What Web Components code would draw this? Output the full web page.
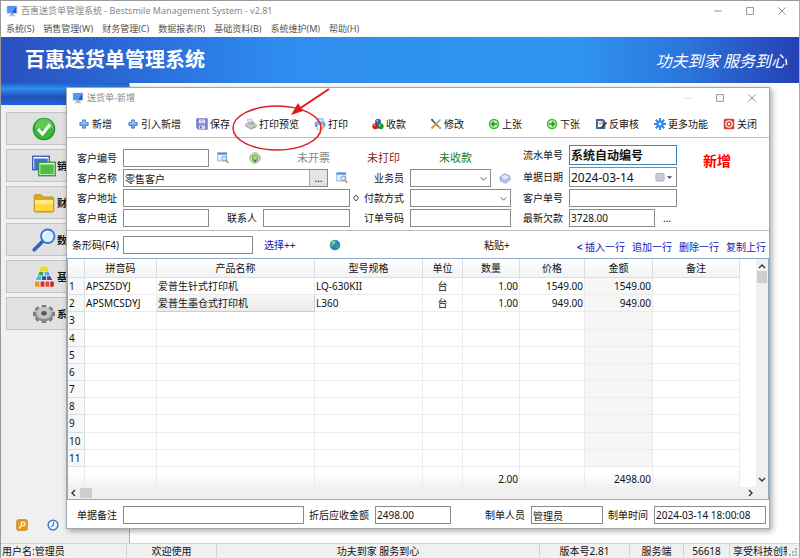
<!DOCTYPE html>
<html lang="zh-CN">

<head>
    <meta charset="utf-8">
    <title>百惠送货单管理系统 - Bestsmile Management System - v2.81</title>
    <style>
        body {
            margin: 0;
            font: 10px/14px "Noto Sans", "Noto Sans CJK SC", sans-serif;
            color: #111;
            background: #fff;
        }
    </style>
</head>

<body>
    <app-window>
        <window-title slot="title" icon="monitor">百惠送货单管理系统 - Bestsmile Management System - v2.81</window-title>
        <menu-bar slot="menu" items="系统(S),销售管理(W),财务管理(C),数据报表(R),基础资料(B),系统维护(M),帮助(H)"></menu-bar>
        <brand-banner slot="banner">
            百惠送货单管理系统
            <span slot="slogan">功夫到家 服务到心</span>
        </brand-banner>
        <side-nav slot="nav">
            <nav-item icon="check" name="主页"></nav-item>
            <nav-item icon="windows" name="销售管理">销</nav-item>
            <nav-item icon="folder" name="财务管理">财</nav-item>
            <nav-item icon="magnifier" name="数据报表">数</nav-item>
            <nav-item icon="palette" name="基础资料">基</nav-item>
            <nav-item icon="cog" name="系统维护">系</nav-item>
        </side-nav>
        <order-dialog></order-dialog>
        <status-bar slot="status"></status-bar>
    </app-window>
</body>
<script>
    // all icons are drawn on a 16x16 box
    const icons = {
        monitor: `<rect x="1" y="1" width="14" height="10.5" rx="1" fill="#b9c6dc"/><rect x="2.200" y="2" width="11.600" height="8.500" fill="#1c55d8"/><path d="M2.200 2h11.600L8 10.500H2.200z" fill="#4f9af5"/><path d="M6 11.500h4v2H6z" fill="#9a9a9a"/><path d="M4 13.500h8V15H4z" fill="#bbb"/>`,
        plus: `<path d="M6 2.500h4V6h3.500v4H10v3.500H6V10H2.500V6H6z" fill="#6ea3ea" stroke="#4d84d0" stroke-width="1.200" stroke-linejoin="round"/><path d="M7 4h2v3h3v1H4V7h3z" fill="#a6cbf8"/>`,
        save: `<path d="M1 1h14v14H3l-2-2z" fill="#8484d8" stroke="#6464b4"/><path d="M4 2h8v5H4z" fill="#f2f2ff"/><path d="M5 3.500h6M5 5.500h6" stroke="#a5a5d5"/><path d="M4 10h8v5H4z" fill="#ddd"/><path d="M5.500 11h2v3h-2z" fill="#5b5bb5"/>`,
        preview: `<path d="M3 2l6-1 3 6-7 2z" fill="#dceaf7" stroke="#a8b6c2" stroke-width=".8"/><path d="M1 8l9-3 5 4v3l-7 3-7-4z" fill="#b8b8b8" stroke="#8d8d8d" stroke-width=".8"/><path d="M1 8l7 3.500L15 9" stroke="#eee" fill="none"/><circle cx="12" cy="11.500" r="1" fill="#5b5"/>`,
        print: `<path d="M4 1h8v5H4z" fill="#d7e6fa" stroke="#6d98d8"/><rect x="1" y="5" width="14" height="7" rx="2" fill="#5f94e8"/><path d="M2 7h12" stroke="#bdd6ff"/><path d="M4 9h8v6H4z" fill="#fff" stroke="#b0a080"/><path d="M7 12l6-2 1 3-5 2z" fill="#f5b93c"/>`,
        balls: `<circle cx="8" cy="5" r="4" fill="#3864c8"/><circle cx="4.500" cy="11" r="4" fill="#d81818"/><circle cx="11.500" cy="11" r="4" fill="#189838"/><circle cx="7" cy="3.600" r="1.200" fill="#9fbdf5"/><circle cx="3.300" cy="9.600" r="1.200" fill="#ff9a9a"/><circle cx="10.400" cy="9.600" r="1.200" fill="#8fe0a0"/>`,
        tools: `<path d="M2 2l12 12" stroke="#555" stroke-width="2.200"/><path d="M1 1l3.500 1L3 4.500z" fill="#444"/><path d="M14 2L3 13" stroke="#8fa0b8" stroke-width="2"/><path d="M8 8l-6 6" stroke="#d6a030" stroke-width="2.600"/><path d="M10 10l4 4" stroke="#e0a838" stroke-width="2.600"/>`,
        prev: `<circle cx="8" cy="8" r="7" fill="#3db83a"/><circle cx="8" cy="8" r="5" fill="#c8f4b8"/><path d="M12 8H5M8 5L5 8l3 3" stroke="#249824" stroke-width="2" fill="none"/>`,
        next: `<circle cx="8" cy="8" r="7" fill="#3db83a"/><circle cx="8" cy="8" r="5" fill="#c8f4b8"/><path d="M4 8h7M8 5l3 3-3 3" stroke="#249824" stroke-width="2" fill="none"/>`,
        review: `<path d="M2 2h9l2 2v10H2z" fill="#3c6cb8" stroke="#1f4484"/><path d="M4 4h6v8H4z" fill="#fff"/><path d="M5 6l2 2 3-4" stroke="#e8a020" stroke-width="1.600" fill="none"/><path d="M15 5l-7 7-1 2 2.500-.6L16 7z" fill="#333"/>`,
        gear: `<g stroke="#2f86e8" stroke-width="2.600"><path d="M8 0v16M0 8h16M2.400 2.400l11.200 11.200M13.600 2.400L2.400 13.600"/></g><circle cx="8" cy="8" r="4.800" fill="#2f86e8"/><circle cx="8" cy="8" r="2" fill="#d8ebff"/>`,
        power: `<rect x="1" y="1" width="14" height="14" rx="2" fill="#d8462c"/><circle cx="8" cy="8" r="4.300" fill="none" stroke="#fff" stroke-width="1.500"/><circle cx="8" cy="8" r="1.700" fill="#fff"/>`,
        find: `<rect x="1" y="1" width="12" height="11" fill="#e8f3ff" stroke="#7fa8d8"/><path d="M1 1h12v2.500H1z" fill="#4d88d8"/><circle cx="9.500" cy="8.500" r="3.200" fill="#cfe9ff" stroke="#5a8fc8"/><path d="M12 11l3 3.500" stroke="#e09030" stroke-width="2.200"/>`,
        refresh: `<circle cx="8" cy="8" r="6.800" fill="#e4efdc" stroke="#7f9f74" stroke-width="1.200"/><circle cx="8" cy="8" r="4.600" fill="#6fb552"/><path d="M5 11h6l-3 3z" fill="#3b8a2c"/><circle cx="8" cy="7.500" r="2.600" fill="#a5dc8a"/>`,
        tag: `<path d="M1 7l6-5 7 3 1 5-6 5-7-3z" fill="#b8c4f0" stroke="#8a9ad0"/><path d="M3 7l4-3.500L13 6 9 9.500z" fill="#e6ebff"/>`,
        globe: `<circle cx="8" cy="8" r="7" fill="#2f7ae0"/><path d="M3 4c3-3 7-2 7 0s-3 2-3 4-3 3-5 1c-1-1-.5-3 1-5z" fill="#4cc048"/><path d="M10 8c3-1 4 0 4 1s-2 5-4 4-2-4 0-5z" fill="#3ab044"/><circle cx="6" cy="4.500" r="1.500" fill="#d0f0e0" opacity=".7"/>`,
        calendar: `<rect x="1.500" y="2.500" width="13" height="12" rx="2" fill="#dcdfe8" stroke="#777c8c"/><path d="M3 6h10M3 9h10M3 12h10M6 4v9M10 4v9" stroke="#a8adbd" stroke-width=".8"/>`,
        diamond: `<path d="M8 2l5 6-5 6-5-6z" fill="none" stroke="#333" stroke-width="1.800"/>`,
        down: `<path d="M3 6l5 5 5-5" fill="none" stroke="#444" stroke-width="1.500"/>`,
        drop: `<path d="M2 5h12l-6 6z" fill="#334466"/>`,
        check: `<circle cx="8" cy="8" r="7.500" fill="#1e9426"/><circle cx="8" cy="8" r="6.700" fill="#3cb83c"/><path d="M1.800 7a6.200 6.200 0 0 1 12.400 0C11 8.500 5 8.500 1.800 7z" fill="#70d060" opacity=".7"/><path d="M4 8l3 3.300L12 5" fill="none" stroke="#fff" stroke-width="2"/>`,
        windows: `<rect x=".5" y="1.500" width="11" height="9" fill="#fff" stroke="#2448a8" stroke-width=".8"/><rect x="1.500" y="3" width="9" height="7" fill="#4272d8"/><rect x="4.500" y="5.500" width="11" height="9" fill="#dff5d8" stroke="#2a8a2a" stroke-width=".8"/><rect x="5.500" y="7" width="9" height="6.500" fill="#48c048"/>`,
        folder: `<path d="M1.500 3.500q0-1 1-1H6l1.500 1.500h6q1 0 1 1v8q0 1-1 1h-11q-1 0-1-1z" fill="#e0a818" stroke="#c08a10" stroke-width=".6"/><path d="M2 6h12v7.300H2z" fill="#ffd840"/><path d="M2 6h12v2.500H2z" fill="#ffec88"/>`,
        magnifier: `<path d="M7 9l-5.500 5.500" stroke="#2a64c0" stroke-width="2.400" stroke-linecap="round"/><circle cx="10.500" cy="5.500" r="4.500" fill="#d8efff" stroke="#3878d0" stroke-width="1.200"/><path d="M7.800 5a3 3 0 0 1 3-2.500" stroke="#fff" fill="none"/>`,
        palette: `<path d="M6 1l4 0 5 9v5H1.500v-4z" fill="#e8e8e8"/><path d="M6 1h4l1 3H5z" fill="#e8dc28"/><path d="M5 4.500h2.500v2.500H4z" fill="#38a848"/><path d="M8.500 4.500H11l1 2.500H8.500z" fill="#58a8e8"/><path d="M3.500 7.500H6V10H2.500z" fill="#48b8e0"/><path d="M6.600 7.500h2.800V10H6.600z" fill="#3048b8"/><path d="M10 7.500h2.300l1.200 2.500H10z" fill="#6838a8"/><path d="M2 11h3v3.500H2z" fill="#f09030"/><path d="M5.700 11h2.600v3.500H5.700z" fill="#d83028"/><path d="M9 11h2.500v3.500H9z" fill="#e04838"/><path d="M12.200 11h2.300v3.500h-2.300z" fill="#c82020"/>`,
        cog: `<g stroke="#7c7c7c" stroke-width="3"><path d="M8 2v12M.7 8h14.600M2.600 4l10.800 8M13.400 4L2.600 12"/></g><ellipse cx="8" cy="8.400" rx="5.600" ry="4.600" fill="#8c8c8c"/><ellipse cx="8" cy="7.400" rx="5.200" ry="4" fill="#c4c4c4"/><ellipse cx="8" cy="7.500" rx="1.800" ry="1.500" fill="#555"/>`,
        key: `<rect x="1" y="1" width="14" height="14" rx="2" fill="#e8a020" stroke="#a87010"/><circle cx="9.500" cy="6.500" r="2.500" fill="none" stroke="#fff" stroke-width="1.500"/><path d="M7.500 8.500L4 12.500" stroke="#fff" stroke-width="1.600"/>`,
        clock: `<circle cx="8" cy="8" r="6.500" fill="#eef5ff" stroke="#3c78d0" stroke-width="2"/><path d="M8.500 4v4.500L5.500 10" stroke="#2850a0" stroke-width="1.300" fill="none"/>`,
        min: `<path d="M2 8h12" stroke="currentColor" stroke-width="1.400"/>`,
        max: `<path d="M2.500 2.500h11v11h-11z" stroke="currentColor" stroke-width="1.400" fill="none"/>`,
        close: `<path d="M2 2l12 12M14 2L2 14" stroke="currentColor" stroke-width="1.400"/>`,
    };

    // base class, puts the markup of render() in a shadow root
    class BaseElement extends HTMLElement {
        constructor() {
            super();
            this.shadow = this.attachShadow({ mode: 'open' });
        }
        connectedCallback() {
            this.shadow.innerHTML = this.render();
        }
        attr(name) {
            return this.getAttribute(name) || '';
        }
    }

    class UiIcon extends BaseElement {
        render() {
            return `
            <style>
                :host { display: inline-block; flex: none; width: var(--icon-size, 12px); height: var(--icon-size, 12px); }
                svg { display: block; width: 100%; height: 100%; }
            </style>
            <svg viewBox="0 0 16 16" aria-hidden="true">${icons[this.attr('name')]}</svg>`;
        }
    }
    customElements.define('ui-icon', UiIcon);

    class AppWindow extends BaseElement {
        render() {
            return `
            <style>
                :host {
                    display: flex;
                    flex-direction: column;
                    position: relative;
                    box-sizing: border-box;
                    min-height: 100vh;
                    overflow: hidden;
                    border-left: 1px solid #999;
                    border-right: 1px solid #aaa;
                    border-top: 1px solid #999;
                }
                main { flex: 1; display: flex; }
            </style>
            <slot name="title"></slot>
            <slot name="menu"></slot>
            <slot name="banner"></slot>
            <main><slot name="nav"></slot><slot></slot></main>
            <slot name="status"></slot>`;
        }
    }
    customElements.define('app-window', AppWindow);

    class WindowTitle extends BaseElement {
        render() {
            return `
            <style>
                :host { display: flex; align-items: center; gap: 3px; height: 20px; padding: 0 12px 0 5px; font-size: 9px; color: #888; }
                .text { flex: 1; }
                .controls { display: flex; gap: 22px; }
                button { border: 0; padding: 0; background: none; color: #888; display: flex; --icon-size: 10px; }
                :host([fixed]) button:first-child { color: #ddd; }
            </style>
            <ui-icon name="${this.attr('icon')}"></ui-icon>
            <span class="text"><slot></slot></span>
            <div class="controls">
                <button aria-label="最小化"><ui-icon name="min"></ui-icon></button>
                <button aria-label="最大化"><ui-icon name="max"></ui-icon></button>
                <button aria-label="关闭窗口"><ui-icon name="close"></ui-icon></button>
            </div>`;
        }
    }
    customElements.define('window-title', WindowTitle);

    class MenuBar extends BaseElement {
        render() {
            const items = this.attr('items').split(',').map(t => `<button>${t}</button>`).join('');
            return `
            <style>
                :host { display: block; }
                nav { display: flex; gap: 9px; padding: 0 5px; height: 16px; }
                button { font: inherit; font-size: 9px; line-height: 16px; color: #555; border: 0; padding: 0; background: none; }
            </style>
            <nav>${items}</nav>`;
        }
    }
    customElements.define('menu-bar', MenuBar);

    class BrandBanner extends BaseElement {
        render() {
            return `
            <style>
                :host {
                    display: block;
                    background: linear-gradient(90deg, #2a4fc0, #2a6ddb 18%, #2e8eef 36%, #2f95f1 72%, #2c74dc 86%, #2540b4);
                }
                header { display: flex; align-items: center; justify-content: space-between; height: 46px; padding: 0 12px 0 24px; }
                h1 { margin: 0; font-size: 20px; line-height: 28px; font-weight: bold; color: #fff; }
                .slogan { font: italic 16px/20px "STXingkai", "KaiTi", "Noto Sans CJK SC", sans-serif; color: #fff; }
            </style>
            <header>
                <h1><slot></slot></h1>
                <div class="slogan"><slot name="slogan"></slot></div>
            </header>`;
        }
    }
    customElements.define('brand-banner', BrandBanner);

    class SideNav extends BaseElement {
        render() {
            return `
            <style>
                :host { display: flex; flex-direction: column; box-sizing: border-box; width: 129px; background: #f0f0f0; border-right: 1px solid #8fb4dc; }
                .head { height: 22px; background: linear-gradient(#1c62cc, #2f8ef0 25%, #2350b8 65%, #1f64dc); }
                .items { flex: 1; display: flex; flex-direction: column; gap: 4px; padding: 7px 5px; }
                .tools { display: flex; gap: 19px; padding: 0 15px 12px; }
                button { display: flex; border: 0; padding: 0; background: none; }
            </style>
            <div class="head"></div>
            <div class="items"><slot></slot></div>
            <div class="tools">
                <button aria-label="密码"><ui-icon name="key"></ui-icon></button>
                <button aria-label="时钟"><ui-icon name="clock"></ui-icon></button>
            </div>`;
        }
    }
    customElements.define('side-nav', SideNav);

    class NavItem extends BaseElement {
        render() {
            return `
            <style>
                :host { display: block; --icon-size: 24px; }
                button {
                    display: flex;
                    align-items: center;
                    gap: 1px;
                    box-sizing: border-box;
                    width: 100%;
                    height: 33px;
                    padding: 0 0 0 25px;
                    font: inherit;
                    font-weight: bold;
                    color: #111;
                    border: 1px solid #c4c4c4;
                    background: #e1e1e1;
                    white-space: nowrap;
                    overflow: hidden;
                }
            </style>
            <button aria-label="${this.attr('name')}"><ui-icon name="${this.attr('icon')}"></ui-icon><slot></slot></button>`;
        }
    }
    customElements.define('nav-item', NavItem);

    class ToolButton extends BaseElement {
        render() {
            return `
            <style>
                :host { display: block; }
                button { display: flex; align-items: center; gap: 2px; height: 20px; padding: 0; border: 0; background: none; font: inherit; color: #111; white-space: nowrap; }
            </style>
            <button><ui-icon name="${this.attr('icon')}"></ui-icon><slot></slot></button>`;
        }
    }
    customElements.define('tool-button', ToolButton);

    // label + text box, or label + drop-down with type="select"
    class FormField extends BaseElement {
        render() {
            const isSelect = this.attr('type') === 'select';
            const control = isSelect
                ? `<select><option>${this.attr('value')}</option></select><ui-icon class="arrow" name="down"></ui-icon>`
                : `<input type="text" value="${this.attr('value')}">`;
            return `
            <style>
                :host { display: flex; min-width: 0; }
                label { flex: 1; display: flex; align-items: center; gap: 6px; min-width: 0; white-space: nowrap; }
                .label { width: var(--label-width, auto); text-align: right; }
                .box {
                    flex: 1;
                    display: flex;
                    align-items: center;
                    box-sizing: border-box;
                    min-width: 0;
                    height: var(--box-height, 18px);
                    border: 1px solid var(--box-border, #8a8a8a);
                    background: #fff;
                }
                input, select {
                    flex: 1;
                    min-width: 0;
                    width: 0;
                    height: 100%;
                    box-sizing: border-box;
                    padding: 0 1px;
                    border: 0;
                    outline: 0;
                    background: none;
                    appearance: none;
                    color: #111;
                    font: inherit;
                    font-size: var(--box-font, 10px);
                    font-weight: var(--box-weight, normal);
                }
                .arrow { --icon-size: 9px; margin-right: 2px; }
            </style>
            <label>
                <span class="label">${this.attr('label')}</span>
                <span class="box">${control}<slot></slot></span>
            </label>`;
        }
    }
    customElements.define('form-field', FormField);

    const headers = ['', '拼音码', '产品名称', '型号规格', '单位', '数量', '价格', '金额', '备注', ''];
    const lines = [
        ['APSZSDYJ', '爱普生针式打印机', 'LQ-630KII', '台', '1.00', '1549.00', '1549.00', '', ''],
        ['APSMCSDYJ', '爱普生墨仓式打印机', 'L360', '台', '1.00', '949.00', '949.00', '', ''],
    ];

    class OrderGrid extends BaseElement {
        render() {
            const widths = [17, 72, 158, 108, 40, 57, 65, 68, 87];
            const cols = widths.map(w => `<col style="width:${w}px">`).join('') + '<col>';
            const head = headers.map(h => `<th>${h}</th>`).join('');
            let body = '';
            for (let i = 0; i < 11; i++) {
                const line = lines[i] || Array(9).fill('');
                body += `<tr><th>${i + 1}</th>${line.map(c => `<td>${c}</td>`).join('')}</tr>`;
            }
            const foot = ['', '', '', '', '', '2.00', '', '2498.00', '', ''].map(c => `<td>${c}</td>`).join('');
            return `
            <style>
                :host { display: block; border: 1px solid #8ea9c9; background: #fff; }
                .view { display: flex; }
                table { flex: 1; min-width: 0; height: 228px; table-layout: fixed; border-collapse: separate; border-spacing: 0; }
                th, td { padding: 0 1px; line-height: 14px; white-space: nowrap; overflow: hidden; font-weight: normal; border-right: 1px solid #ececec; border-bottom: 1px solid #ececec; }
                thead th { height: 18px; text-align: center; background: linear-gradient(#fff, #f1f3f5); border-color: #d9dfe6; }
                tbody th { text-align: left; background: #f7f8f9; border-color: #dcdfe2; }
                td:nth-child(5) { text-align: center; }
                td:nth-child(6), td:nth-child(7), td:nth-child(8) { text-align: right; }
                tbody td:nth-child(8) { background: #f6f6f6; }
                tbody tr:nth-child(2) td:nth-child(3) { background: linear-gradient(#f6f6f6, #ececec); border-color: #ccc; }
                th:last-child, td:last-child { border-color: transparent; background: none; }
                tfoot td { height: 17px; padding-top: 3px; background: linear-gradient(#fff 30%, #f1f2f4); border-bottom: 0; }
                .vbar, .hbar { display: flex; justify-content: space-between; background: #f0f0f0; }
                .vbar { flex-direction: column; align-items: center; width: 12px; padding: 2px 0; box-sizing: border-box; }
                .hbar { align-items: center; height: 12px; padding: 0 12px 0 0; }
                .thumb { background: #cdcdcd; }
                .vbar .thumb { width: 10px; height: 12px; margin-bottom: auto; }
                .hbar .thumb { width: 12px; height: 10px; margin: 0 auto 0 2px; }
                svg { width: 8px; height: 8px; fill: none; stroke: #333; stroke-width: 1.400; margin: 1px; }
            </style>
            <div class="view">
                <table>
                    <colgroup>${cols}</colgroup>
                    <thead><tr>${head}</tr></thead>
                    <tbody>${body}</tbody>
                    <tfoot><tr>${foot}</tr></tfoot>
                </table>
                <div class="vbar">
                    <svg viewBox="0 0 8 8"><path d="M1 6l3-3 3 3"/></svg>
                    <div class="thumb"></div>
                    <svg viewBox="0 0 8 8"><path d="M1 2l3 3 3-3"/></svg>
                </div>
            </div>
            <div class="hbar">
                <svg viewBox="0 0 8 8"><path d="M6 1L3 4l3 3"/></svg>
                <div class="thumb"></div>
                <svg viewBox="0 0 8 8"><path d="M2 1l3 3-3 3"/></svg>
            </div>`;
        }
    }
    customElements.define('order-grid', OrderGrid);

    class OrderDialog extends BaseElement {
        render() {
            return `
            <style>
                /* floats over the main window */
                :host {
                    display: block;
                    position: absolute;
                    left: 65px;
                    right: 29px;
                    top: 86px;
                    border: 1px solid #a6a6a6;
                    background: #fff;
                    box-shadow: 2px 2px 6px rgba(0, 0, 0, .35);
                }
                .toolbar { display: flex; justify-content: space-between; padding: 6px 12px 3px 11px; border-bottom: 1px solid #bbb; }
                .group { display: flex; gap: 15px; }
                .group.wide { gap: 24px; }
                .form { display: flex; padding: 7px 38px 3px 10px; border-bottom: 1px solid #bbb; }
                .col { display: flex; flex-direction: column; gap: 2px; }
                .a { flex: 1; min-width: 0; padding-top: 4px; margin-right: 4px; }
                .b { width: 147px; padding-top: 4px; margin-right: 12px; --label-width: 40px; }
                .c { width: 154px; }
                .row { display: flex; align-items: center; gap: 8px; height: 18px; }
                .row.tall { height: 20px; --box-height: 20px; --box-font: 12px; }
                .row.name { padding-right: 12px; }
                .row.address { gap: 2px; --icon-size: 8px; }
                .row.phone { gap: 18px; padding-right: 10px; }
                .code { width: 132px; }
                .grow { flex: 1; }
                .state { font-size: 11px; color: #888; white-space: nowrap; }
                .a .state { margin: 0 30px 0 auto; }
                .b .states { padding-left: 3px; gap: 39px; }
                .state.unprinted { color: #902020; }
                .state.unpaid { color: #208020; }
                .find-more { margin-left: 12px; }
                .number { --box-border: #3f86b8; --box-weight: bold; }
                .stamp { width: 28px; margin: 7px 0 0 26px; font: bold 14px/20px "Liberation Serif", "Noto Sans CJK SC", serif; color: #f00; white-space: nowrap; }
                button { font: inherit; color: inherit; border: 0; padding: 0; background: none; display: flex; align-items: center; }
                .lookup { width: 18px; height: 16px; justify-content: center; background: #e4e4e4; border-left: 1px solid #aaa; }
                .date { gap: 1px; margin-right: 3px; --icon-size: 10px; }
                .date ui-icon + ui-icon { --icon-size: 7px; }
                .barcode { display: flex; align-items: center; gap: 11px; height: 27px; padding: 0 3px 0 5px; }
                .barcode form-field { width: 181px; --label-width: 45px; }
                .barcode ui-icon { margin-left: 23px; }
                .barcode .paste { margin: 0 56px 0 auto; }
                a { color: #1414b8; text-decoration: none; white-space: nowrap; }
                .links { display: flex; gap: 7px; padding-top: 4px; }
                .bottom { display: flex; gap: 5px; padding: 6px 3px 4px 10px; }
                .bottom .amount { width: 142px; margin-right: 29px; }
                .bottom .maker { width: 118px; }
                .bottom .time { width: 158px; }
                .mark { position: absolute; left: 164px; top: -3px; width: 104px; height: 70px; pointer-events: none; }
            </style>
            <window-title icon="monitor" fixed>送货单-新增</window-title>
            <div class="toolbar">
                <div class="group">
                    <tool-button icon="plus">新增</tool-button>
                    <tool-button icon="plus">引入新增</tool-button>
                    <tool-button icon="save">保存</tool-button>
                    <tool-button icon="preview">打印预览</tool-button>
                </div>
                <div class="group wide">
                    <tool-button icon="print">打印</tool-button>
                    <tool-button icon="balls">收款</tool-button>
                    <tool-button icon="tools">修改</tool-button>
                    <tool-button icon="prev">上张</tool-button>
                    <tool-button icon="next">下张</tool-button>
                </div>
                <div class="group">
                    <tool-button icon="review">反审核</tool-button>
                    <tool-button icon="gear">更多功能</tool-button>
                    <tool-button icon="power">关闭</tool-button>
                </div>
            </div>
            <div class="form">
                <div class="col a">
                    <div class="row">
                        <form-field class="code" label="客户编号"></form-field>
                        <button aria-label="查找客户"><ui-icon name="find"></ui-icon></button>
                        <button class="find-more" aria-label="刷新"><ui-icon name="refresh"></ui-icon></button>
                        <span class="state">未开票</span>
                    </div>
                    <div class="row name">
                        <form-field class="grow" label="客户名称" value="零售客户"><button class="lookup">...</button></form-field>
                        <button aria-label="查找名称"><ui-icon name="find"></ui-icon></button>
                    </div>
                    <div class="row address">
                        <form-field class="grow" label="客户地址"></form-field>
                        <ui-icon name="diamond"></ui-icon>
                    </div>
                    <div class="row phone">
                        <form-field class="code" label="客户电话"></form-field>
                        <form-field class="grow" label="联系人"></form-field>
                    </div>
                </div>
                <div class="col b">
                    <div class="row states">
                        <span class="state unprinted">未打印</span>
                        <span class="state unpaid">未收款</span>
                    </div>
                    <div class="row">
                        <form-field class="grow" type="select" label="业务员"></form-field>
                        <button aria-label="选择业务员"><ui-icon name="tag"></ui-icon></button>
                    </div>
                    <div class="row"><form-field class="grow" type="select" label="付款方式"></form-field></div>
                    <div class="row"><form-field class="grow" label="订单号码"></form-field></div>
                </div>
                <div class="col c">
                    <div class="row tall"><form-field class="grow number" label="流水单号" value="系统自动编号"></form-field></div>
                    <div class="row tall">
                        <form-field class="grow" label="单据日期" value="2024-03-14">
                            <button class="date" aria-label="选择日期"><ui-icon name="calendar"></ui-icon><ui-icon name="drop"></ui-icon></button>
                        </form-field>
                    </div>
                    <div class="row"><form-field class="grow" label="客户单号"></form-field></div>
                    <div class="row">
                        <form-field class="code" label="最新欠款" value="3728.00"></form-field>
                        <button aria-label="欠款明细">...</button>
                    </div>
                </div>
                <div class="stamp">新增</div>
            </div>
            <div class="barcode">
                <form-field label="条形码(F4)"></form-field>
                <a href="#">选择++</a>
                <ui-icon name="globe"></ui-icon>
                <button class="paste">粘贴+</button>
                <div class="links">
                    <a href="#"><b>&lt;</b> 插入一行</a>
                    <a href="#">追加一行</a>
                    <a href="#">删除一行</a>
                    <a href="#">复制上行</a>
                </div>
            </div>
            <order-grid></order-grid>
            <div class="bottom">
                <form-field class="grow" label="单据备注"></form-field>
                <form-field class="amount" label="折后应收金额" value="2498.00"></form-field>
                <form-field class="maker" label="制单人员" value="管理员"></form-field>
                <form-field class="time" label="制单时间" value="2024-03-14 18:00:08"></form-field>
            </div>
            <svg class="mark" viewBox="0 0 104 70">
                <ellipse cx="46" cy="43" rx="44" ry="22" fill="none" stroke="#d8202c" stroke-width="1.500"/>
                <path d="M98 4L68 24" stroke="#e01818" stroke-width="2"/>
                <path d="M60 30l7-12 5 8z" fill="#e01818"/>
            </svg>`;
        }
    }
    customElements.define('order-dialog', OrderDialog);

    class StatusBar extends BaseElement {
        render() {
            return `
            <style>
                :host { display: block; background: #f0f0f0; border-top: 1px solid #d4d4d4; }
                footer { display: flex; height: 14px; line-height: 14px; text-align: center; white-space: nowrap; }
                span { box-sizing: border-box; overflow: hidden; border-right: 1px solid #d4d4d4; }
                .user { width: 126px; padding-left: 1px; text-align: left; }
                .welcome, .version { width: 90px; }
                .motto { flex: 1; }
                .server { width: 54px; }
                .port { width: 46px; }
                .company { width: 57px; padding-left: 3px; text-align: left; border: 0; }
                svg { width: 12px; height: 14px; fill: #b0b0b0; }
            </style>
            <footer>
                <span class="user">用户名:管理员</span>
                <span class="welcome">欢迎使用</span>
                <span class="motto">功夫到家 服务到心</span>
                <span class="version">版本号2.81</span>
                <span class="server">服务端</span>
                <span class="port">56618</span>
                <span class="company">享受科技创新</span>
                <svg viewBox="0 0 12 14"><path d="M8 4h2v2H8zM8 7h2v2H8zM5 7h2v2H5zM8 10h2v2H8zM5 10h2v2H5zM2 10h2v2H2z"/></svg>
            </footer>`;
        }
    }
    customElements.define('status-bar', StatusBar);
</script>

</html>
